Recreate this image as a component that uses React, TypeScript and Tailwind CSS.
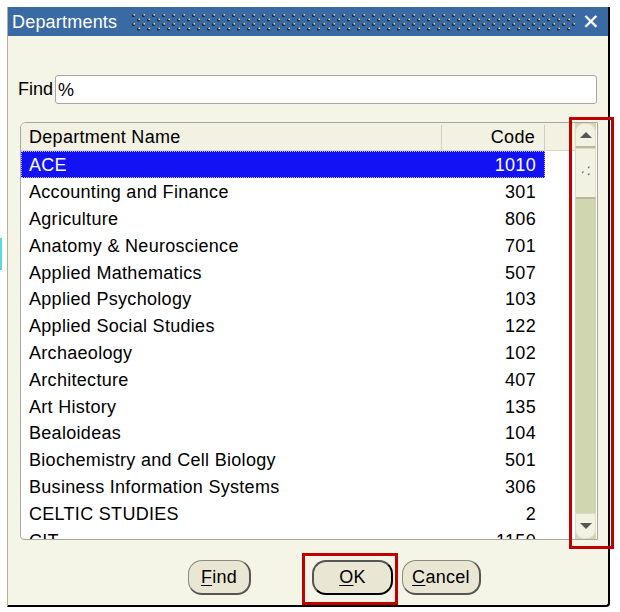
import React from "react";

const rows: [string, string][] = [
	["ACE", "1010"],
	["Accounting and Finance", "301"],
	["Agriculture", "806"],
	["Anatomy & Neuroscience", "701"],
	["Applied Mathematics", "507"],
	["Applied Psychology", "103"],
	["Applied Social Studies", "122"],
	["Archaeology", "102"],
	["Architecture", "407"],
	["Art History", "135"],
	["Bealoideas", "104"],
	["Biochemistry and Cell Biology", "501"],
	["Business Information Systems", "306"],
	["CELTIC STUDIES", "2"],
	["CIT", "1150"],
];

const DotPattern = () => (
	<svg width="446" height="18" className="block">
		<defs>
			<pattern id="dots" width="10" height="9" patternUnits="userSpaceOnUse">
				<circle cx="2.5" cy="2.5" r="1.5" fill="#142030" />
				<circle cx="3.2" cy="1.8" r="0.9" fill="#f0e8a8" />
				<circle cx="7.5" cy="7" r="1.5" fill="#142030" />
				<circle cx="8.2" cy="6.3" r="0.9" fill="#f0e8a8" />
			</pattern>
		</defs>
		<rect width="446" height="18" fill="url(#dots)" />
	</svg>
);

const Btn = ({ label, u, w, isDefault }: { label: string; u: number; w: string; isDefault?: boolean }) => (
	<button
		className={`${w} h-[35px] rounded-[14px] bg-[#e9e7d3] text-[18px] tracking-[0.3px] text-black flex items-center justify-center ${
			isDefault
				? "border-2 border-black border-t-[#555] border-l-[#555]"
				: "border border-[#8a8a80] border-r-2 border-b-2 border-r-[#555] border-b-[#555]"
		}`}>
		<span>
			{label.slice(0, u)}
			<span className="underline underline-offset-2">{label[u]}</span>
			{label.slice(u + 1)}
		</span>
	</button>
);

export default function App() {
	return (
		<div className="relative w-[620px] h-[612px] bg-white pt-[7px] pl-[7px] font-['Liberation_Sans',Arial,sans-serif] overflow-hidden">
			<div className="absolute left-0 top-[238px] w-[2px] h-[32px] bg-[#5ad8e0]" />
			<div className="w-[603px] h-[600px] flex flex-col border-l border-[#b8b090] border-r-2 border-b-2 border-r-black border-b-black rounded-br-[4px] bg-[#f5f5e7]">
				{/* title bar */}
				<div className="h-[29px] bg-[#3a6aa3] flex items-center pl-[4px] pr-[8px] shrink-0">
					<span className="text-white text-[18px] tracking-[0.2px] leading-none mt-[1px]">Departments</span>
					<div className="ml-[14px]">
						<DotPattern />
					</div>
					<span className="ml-auto text-white text-[21px] leading-none">✕</span>
				</div>

				{/* find row */}
				<div className="flex items-center mt-[39px] pl-[10px] pr-[11px]">
					<span className="text-[18px] text-black">Find</span>
					<div className="ml-[2px] flex-1 h-[29px] bg-white border border-[#a8a8a0] rounded-[3px] flex items-center px-[2px] text-[18px] pt-[1px]">
						%
					</div>
				</div>

				{/* list */}
				<div className="mt-[18px] ml-[12px] mr-[10px] h-[418px] border border-[#a8a89c] rounded-tl-[6px] rounded-bl-[4px] flex bg-white overflow-hidden">
					<div className="flex-1 flex flex-col overflow-hidden">
						<div className="h-[28px] shrink-0 flex bg-[#f2f1e2] border-b border-[#d8d6c4] text-[18px] tracking-[0.3px] pt-[2px]">
							<div className="w-[421px] pl-[8px] flex items-center border-r border-[#d0cebc]">Department Name</div>
							<div className="w-[103px] pr-[9px] flex items-center justify-end border-r border-[#d0cebc]">Code</div>
							<div className="flex-1" />
						</div>
						{rows.map(([name, code], i) => (
							<div
								key={name}
								className={`h-[26.8px] shrink-0 flex text-[18px] tracking-[0.3px] pt-[3px] ${
									i === 0 ? "w-[524px] bg-[#1212f4] text-white outline-1 outline-dotted outline-offset-[-1px] outline-[#c0c0ff]" : "text-black"
								}`}>
								<div className="w-[421px] pl-[8px] flex items-center">{name}</div>
								<div className="w-[103px] pr-[9px] flex items-center justify-end">{code}</div>
							</div>
						))}
					</div>
					{/* scrollbar */}
					<div className="w-[21px] mr-[1px] flex flex-col bg-[#cfd6b0]">
						<div className="h-[25px] shrink-0 bg-[#f2f2e2] rounded-t-[9px] border border-[#dcdcc8] border-b-2 border-b-[#b8b8a0] flex items-center justify-center">
							<div className="w-0 h-0 border-l-[6px] border-r-[6px] border-b-[6px] border-l-transparent border-r-transparent border-b-[#555]" />
						</div>
						<div className="h-[51px] shrink-0 bg-[#f2f2e2] border border-[#dcdcc8] border-b-2 border-b-[#b8b8a0] flex items-center justify-center">
							<svg width="12" height="14" viewBox="0 0 12 14">
								<path d="M8 2 L9.5 0.5 M2 7 L3.5 5.5 M8 9 L9.5 7.5" stroke="#777" strokeWidth="1.2" />
							</svg>
						</div>
						<div className="flex-1" />
						<div className="h-[26px] shrink-0 bg-[#f2f2e2] rounded-b-[9px] border border-[#dcdcc8] flex items-center justify-center">
							<div className="w-0 h-0 border-l-[6px] border-r-[6px] border-t-[6px] border-l-transparent border-r-transparent border-t-[#555]" />
						</div>
					</div>
				</div>

				{/* buttons */}
				<div className="flex items-center mt-[20px] pl-[180px] gap-[9px]">
					<Btn label="Find" u={0} w="w-[63px]" />
					<div className="ml-[52px]">
						<Btn label="OK" u={0} w="w-[81px]" isDefault />
					</div>
					<Btn label="Cancel" u={0} w="w-[79px]" />
				</div>
			</div>

			{/* red highlight boxes */}
			<div className="absolute left-[569px] top-[117px] w-[45px] h-[432px] border-[3px] border-[#c00000]" />
			<div className="absolute left-[302px] top-[553px] w-[96px] h-[52px] border-[3px] border-[#c00000]" />
		</div>
	);
}
